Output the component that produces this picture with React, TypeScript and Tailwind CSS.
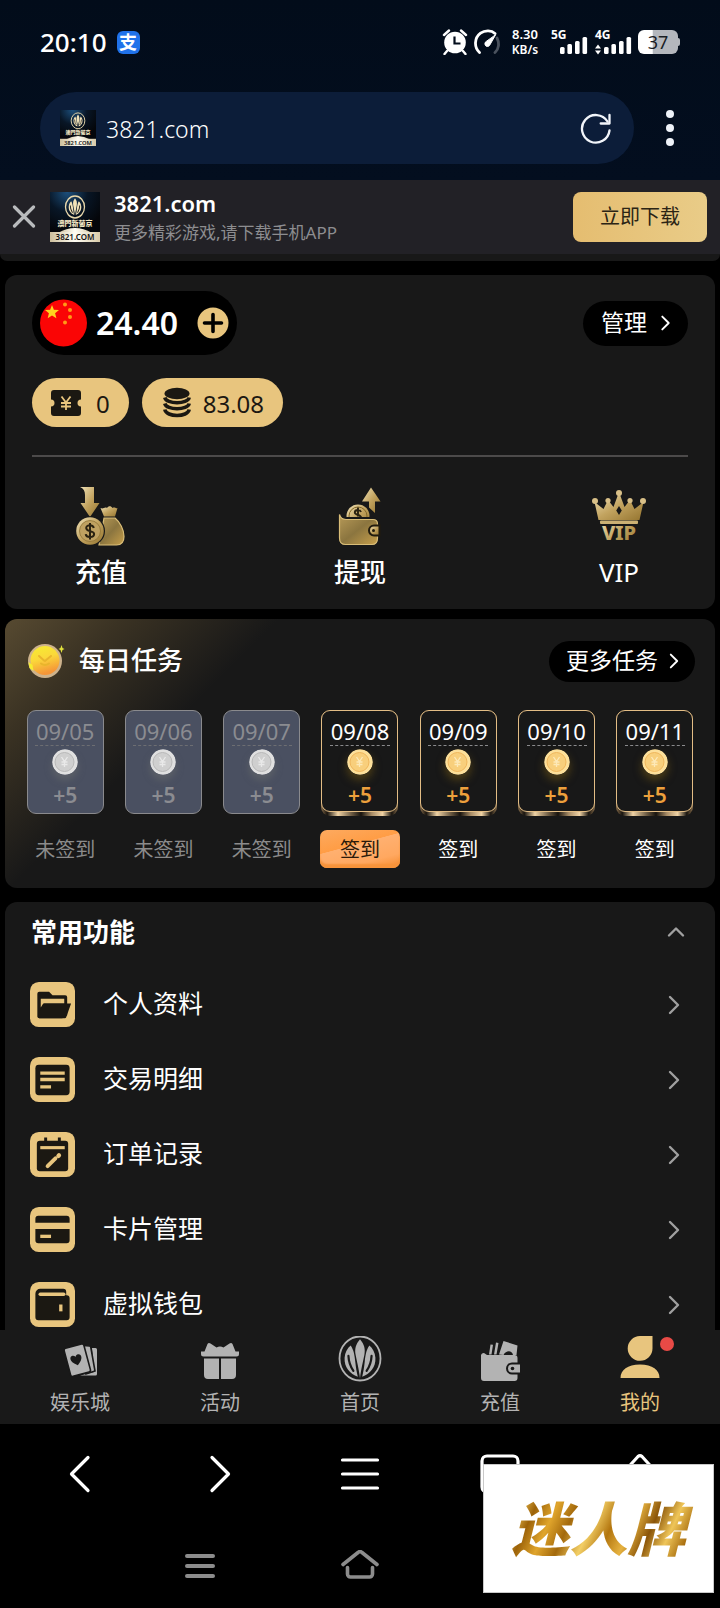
import React from "react";

const sans = "font-['Noto_Sans','Noto_Sans_CJK_SC',sans-serif]";

function GoldDefs() {
  return (
    <svg width="0" height="0" className="absolute" aria-hidden="true">
      <defs>
        <linearGradient id="gold" x1="0" y1="0" x2="1" y2="1">
          <stop offset="0" stopColor="#f0e2b8" />
          <stop offset="0.5" stopColor="#c2a35f" />
          <stop offset="1" stopColor="#94742f" />
        </linearGradient>
        <linearGradient id="goldDark" x1="0" y1="0" x2="1" y2="1">
          <stop offset="0" stopColor="#b79a58" />
          <stop offset="0.5" stopColor="#8b753f" />
          <stop offset="1" stopColor="#c79f4b" />
        </linearGradient>
        <radialGradient id="night" cx="0.35" cy="0" r="0.8">
          <stop offset="0" stopColor="#1c4f7c" />
          <stop offset="0.5" stopColor="#081626" />
          <stop offset="1" stopColor="#04060a" />
        </radialGradient>
        <linearGradient id="sand" x1="0" y1="0" x2="1" y2="0">
          <stop offset="0" stopColor="#cdbf9c" />
          <stop offset="0.5" stopColor="#fffdf4" />
          <stop offset="1" stopColor="#d8caa8" />
        </linearGradient>
        <linearGradient id="face" x1="0" y1="0" x2="0.3" y2="1">
          <stop offset="0" stopColor="#f6ee30" />
          <stop offset="0.5" stopColor="#fbd83a" />
          <stop offset="1" stopColor="#f59638" />
        </linearGradient>
      </defs>
    </svg>
  );
}

function Lotus() {
  return (
    <>
      <path d="M22 5c4 4.500 5 8.500 4 13.500-1.200 6-3 12-4 20.500-1-8.500-2.800-14.500-4-20.500-1-5 0-9 4-13.500Z" />
      <path d="M13.500 10.500c3 4 3.600 9 4.200 14 .5 5 1.300 9 2.300 13C13 35 7.500 29.500 8 21c.3-4.500 2.500-8 5.500-10.500Z" />
      <path d="M30.500 10.500c-3 4-3.600 9-4.200 14-.5 5-1.300 9-2.300 13C31 35 36.500 29.500 36 21c-.3-4.500-2.500-8-5.500-10.500Z" />
      <path d="M11.500 19.500c.2 5 1.700 9 4.500 13M32.500 19.500c-.2 5-1.700 9-4.500 13" fill="none" stroke="#191919" strokeWidth="2" strokeLinecap="round" />
    </>
  );
}

function SiteLogo({ className }: { className: string }) {
  return (
    <svg viewBox="0 0 50 50" className={className} role="img" aria-label="3821.com">
      <rect width="50" height="50" fill="url(#night)" />
      <ellipse cx="25" cy="15" rx="9.500" ry="11" fill="none" stroke="#ead9ac" strokeWidth="1.300" />
      <g fill="#f1e2b8" transform="translate(15.100 3.800) scale(.45 .51)">
        <Lotus />
      </g>
      <path d="M8 41Q25 31 42 41Z" fill="url(#sand)" />
      <rect y="40" width="50" height="10" fill="url(#sand)" />
      <text x="25" y="34" textAnchor="middle" fontSize="7" fontWeight="900" fill="#f3e6c4" fontFamily="Noto Sans CJK TC, sans-serif">澳門新葡京</text>
      <text x="25" y="48" textAnchor="middle" fontSize="8" fontWeight="600" fill="#111" fontFamily="Noto Sans, sans-serif">3821.COM</text>
    </svg>
  );
}

function Chevron({ className }: { className: string }) {
  return (
    <svg viewBox="0 0 12 20" className={className} fill="none" stroke="currentColor" strokeWidth="2.400" strokeLinecap="round" strokeLinejoin="round" aria-hidden="true">
      <path d="m2 2 8 8-8 8" />
    </svg>
  );
}

function Signal({ label, arrows }: { label: string; arrows?: boolean }) {
  return (
    <svg viewBox="0 0 38 30" className="h-[30px] w-[38px]" fill="#fff" role="img" aria-label={label}>
      <text x="1" y="12" fontSize="12" fontWeight="700" fontFamily="Noto Sans, sans-serif">{label}</text>
      <rect x="10" y="20" width="4.600" height="7" rx="1.500" />
      <rect x="17.400" y="17" width="4.600" height="10" rx="1.500" />
      <rect x="25" y="14" width="4.600" height="13" rx="1.500" />
      <rect x="32.500" y="10" width="4.600" height="17" rx="1.500" />
      {arrows && <path d="m4 17.500 3 4H1ZM4 27.500l3-4H1Z" />}
    </svg>
  );
}

function StatusBar() {
  return (
    <div className="flex h-[84px] items-center justify-between px-10 text-white">
      <div className="flex items-center gap-[10px]">
        <span className="text-[26px] leading-8 font-medium">20:10</span>
        <span className="flex size-[23px] items-center justify-center rounded-[6px] bg-[#2072ea] text-[18px] leading-5 font-bold">支</span>
      </div>
      <div className="flex items-center gap-[6px]">
        <svg viewBox="0 0 26 26" className="size-[26px]" aria-label="闹钟" role="img">
          <circle cx="13" cy="13.500" r="10.800" fill="#fff" />
          <path d="M2 6 7 1.500M24 6l-5-4.500M5 22l-2.500 3M21 22l2.500 3" stroke="#fff" strokeWidth="2.400" strokeLinecap="round" />
          <path d="M12.500 7.500v7h6" fill="none" stroke="#030d1c" strokeWidth="2.200" />
        </svg>
        <svg viewBox="0 0 26 26" className="size-[26px]" fill="none" strokeWidth="2.800" strokeLinecap="round" aria-label="网速" role="img">
          <path d="M23 9c2.500 5 2 11-2 14.500" stroke="#4a525e" />
          <path d="M5.500 23.500C0 18.500 0 9 6.500 4.200c4.500-3.200 11-3 14.500.3" stroke="#fff" />
          <path d="M21.500 6 15.500 16.500c-2 2.500-6 0-4.200-3.200Z" fill="#fff" stroke="#fff" strokeWidth="1" strokeLinejoin="round" />
        </svg>
        <div className="ml-1 flex w-[30px] flex-col items-center text-[13px] leading-[15px] font-semibold">
          <span>8.30</span>
          <span className="text-[12px] leading-[15px]">KB/s</span>
        </div>
        <div className="ml-1 flex gap-[6px]">
          <Signal label="5G" />
          <Signal label="4G" arrows />
        </div>
        <div className="flex items-center">
          <div className="flex h-6 w-10 items-center justify-center rounded-[6px] bg-linear-to-r from-white from-36% to-[#b4b7bd] to-37% text-[18px] leading-6 text-[#1a1d24]">37</div>
          <div className="h-2 w-[2px] rounded-r bg-[#b4b7bd]" />
        </div>
      </div>
    </div>
  );
}

function AddressBar() {
  return (
    <div className="flex items-center pt-2 pr-[46px] pb-4 pl-10">
      <div className="flex h-[72px] min-w-0 flex-1 items-center rounded-full bg-[#0c1d39] pr-[22px] pl-5">
        <SiteLogo className="size-9 shrink-0" />
        <input aria-label="网址" defaultValue="3821.com" className="ml-[10px] h-10 min-w-0 flex-1 bg-transparent pt-[2px] text-[23px] leading-8 font-light text-white outline-none" />
        <button aria-label="刷新" className="shrink-0">
          <svg viewBox="0 0 32 32" className="size-8" fill="none" stroke="#f2f5fa" strokeWidth="2.300" strokeLinecap="round" strokeLinejoin="round">
            <path d="M29.500 18.500A13.800 13.800 0 1 1 27.500 9.500" />
            <path d="M29.500 3v8.500h-8.800" />
          </svg>
        </button>
      </div>
      <button aria-label="菜单" className="ml-8 flex flex-col gap-[6px]">
        <span className="size-2 rounded-full bg-[#eef2f8]" />
        <span className="size-2 rounded-full bg-[#eef2f8]" />
        <span className="size-2 rounded-full bg-[#eef2f8]" />
      </button>
    </div>
  );
}

function DownloadBar() {
  return (
    <div className="flex h-[74px] shrink-0 items-center bg-[#222126] pr-[13px] pl-3">
      <button aria-label="关闭" className="shrink-0">
        <svg viewBox="0 0 24 24" className="size-6" stroke="#b9bbbd" strokeWidth="3.200" strokeLinecap="round">
          <path d="m2.500 2 19 19M21.500 2l-19 19" />
        </svg>
      </button>
      <SiteLogo className="ml-[14px] size-[50px] shrink-0" />
      <div className="ml-[14px] flex min-w-0 flex-1 flex-col gap-1">
        <strong className="text-[22px] leading-7 font-semibold text-white">3821.com</strong>
        <span className="truncate text-[17px] leading-6 text-[#8d8d90]">更多精彩游戏,请下载手机APP</span>
      </div>
      <button className="h-[50px] w-[134px] shrink-0 rounded-lg bg-linear-to-r from-[#e5bd70] to-[#e9cc88] text-[20px] text-[#2b2415]">立即下载</button>
    </div>
  );
}

function DepositIcon() {
  return (
    <svg viewBox="0 0 60 60" className="size-[60px]" aria-hidden="true">
      <path d="M9 1h14v16h5.500L19 31 9.500 17H14V9c0-4-1.500-6.500-5-8Z" fill="url(#gold)" />
      <path d="M29.500 22c3 1.500 4-1.500 6.500 0 1.500-2.500 4-2.500 5.500 0 2.500-1.500 3 1 5 0L44 30.500H33Z" fill="url(#gold)" />
      <path d="M33 32h11c5 4 9 12 9 18.500 0 6-3 8.500-7.500 8.500H28Z" fill="url(#goldDark)" stroke="#d9bd78" strokeWidth="1.200" />
      <ellipse cx="19" cy="45" rx="15" ry="14.800" fill="#181818" />
      <circle cx="19" cy="45" r="13.800" fill="url(#gold)" />
      <circle cx="19" cy="45" r="10.500" fill="#bfa161" stroke="#8f7336" strokeWidth=".8" />
      <path d="M22.800 42c-.4-2-1.800-2.700-3.800-2.700-2.200 0-3.800 1-3.800 2.800 0 4.300 7.900 1.800 7.900 6 0 2-1.800 3-4.100 3-2.300 0-4-1-4.300-3M19 37v16.500" fill="none" stroke="#2a2211" strokeWidth="2" />
    </svg>
  );
}

function WithdrawIcon() {
  return (
    <svg viewBox="0 0 60 60" className="size-[60px]" aria-hidden="true">
      <path d="m41 1.500 9.500 14H45V27l-6-5.500v-6h-7Z" fill="url(#gold)" />
      <circle cx="28" cy="30" r="11.500" fill="url(#gold)" />
      <circle cx="28" cy="30" r="9" fill="none" stroke="#836828" strokeWidth="1" />
      <path d="M31 26c-.5-1.500-1.600-2-3-2-2 0-3.200 1-3.200 2.500 0 3 6.300 1.500 6.300 5.500M28 21.500v9" fill="none" stroke="#2a2211" strokeWidth="1.900" />
      <path d="M9.500 29v22.500c0 4 2 6 6 6H43c4 0 6-2 6-6V37c0-3-2-5-5-5H15c-3 0-4.500-.5-5.500-3Z" fill="#181818" stroke="#181818" strokeWidth="2" />
      <path d="M9.500 28.500V52c0 4.500 2 6.500 6 6.500H42c4 0 5.500-2 5.500-6.500V38c0-3-1.500-4.500-4.500-4.500H16c-3 0-5.500-1-6.500-5Z" fill="url(#goldDark)" stroke="#d9bd78" strokeWidth="1.200" />
      <path d="M49.500 39.500H44a5 5 0 0 0 0 10h5.500Z" fill="url(#gold)" stroke="#211b0e" strokeWidth="2" />
      <circle cx="43.500" cy="44.500" r="1.500" fill="#211b0e" />
    </svg>
  );
}

function VipIcon() {
  return (
    <svg viewBox="0 0 60 60" className="size-[60px]" aria-hidden="true">
      <path d="M9.500 34 5.500 16l9 7 4.500-9 5.500 7L30 6l5.500 15 5.500-7 4.500 9 9-7-4 18ZM30 20l-2.800 4.500L30 29l2.800-4.500Z" fill="url(#gold)" fillRule="evenodd" />
      <g fill="#d9c088">
        <circle cx="6" cy="15" r="3" />
        <circle cx="19" cy="14.500" r="2.600" />
        <circle cx="30" cy="7" r="3" />
        <circle cx="41" cy="14.500" r="2.600" />
        <circle cx="54" cy="15" r="3" />
      </g>
      <rect x="11" y="34.500" width="38" height="3.600" rx="1" fill="#cbb073" />
      <text x="30" y="54" textAnchor="middle" fontSize="20" fontWeight="800" fill="url(#gold)" fontFamily="Noto Sans, sans-serif">VIP</text>
    </svg>
  );
}

function WalletCard() {
  return (
    <section className="mx-[5px] mt-[14px] rounded-xl bg-[#181818] px-[27px] pt-4 pb-[19px]">
      <div className="flex items-center justify-between">
        <div className="flex h-16 items-center rounded-full bg-black px-2">
          <svg viewBox="0 0 48 48" className="size-12" role="img" aria-label="人民币">
            <circle cx="23.500" cy="24" r="23.500" fill="#fa0505" />
            <path d="m12 6 1.900 4.700 5.100.3-3.900 3.300 1.300 4.900-4.400-2.700-4.300 2.700 1.200-4.900L5 11l5.100-.3Z" fill="#ffd21f" />
            <g fill="#ff9a17">
              <circle cx="25" cy="5.500" r="2" />
              <circle cx="30" cy="11" r="2" />
              <circle cx="30" cy="18" r="2" />
              <circle cx="25" cy="23.500" r="2" />
            </g>
          </svg>
          <span className="ml-2 text-[32px] leading-10 font-semibold text-white">24.40</span>
          <button aria-label="充值" className="ml-[19px]">
            <svg viewBox="0 0 32 32" className="size-8">
              <circle cx="16" cy="16" r="15.500" fill="#e8c57e" />
              <path d="M16 7.500v17M7.500 16h17" stroke="#000" strokeWidth="3.600" strokeLinecap="round" />
            </svg>
          </button>
        </div>
        <button className="flex h-[45px] items-center gap-[13px] rounded-full bg-black pr-[17px] pl-[18px] text-[23px] leading-8 text-white">
          <span className="pb-[2px]">管理</span>
          <Chevron className="h-4 w-[11px]" />
        </button>
      </div>
      <div className="mt-[23px] flex gap-[13px] text-[24px] leading-8 text-[#1c1812]">
        <div className="flex h-[49px] items-center rounded-full bg-[#e8c57e] pr-[19px] pl-[18px]">
          <svg viewBox="0 0 32 28" className="h-7 w-8" aria-hidden="true">
            <path d="M4 1h24a3 3 0 0 1 3 3v6.500a3.500 3.500 0 0 0 0 7V24a3 3 0 0 1-3 3H4a3 3 0 0 1-3-3v-6.500a3.500 3.500 0 0 0 0-7V4a3 3 0 0 1 3-3Z" fill="#1b1812" />
            <path d="m11.500 7.500 4.500 6 4.500-6M16 13.500V21M11 14h10M11 17.500h10" fill="none" stroke="#e8c57e" strokeWidth="1.800" />
          </svg>
          <span className="ml-[14px] pt-[2px]">0</span>
        </div>
        <div className="flex h-[49px] items-center rounded-full bg-[#e8c57e] pr-[19px] pl-[21px]">
          <svg viewBox="0 0 28 32" className="h-8 w-7" aria-hidden="true">
            <ellipse cx="14" cy="6.500" rx="12.500" ry="5.800" fill="#1b1812" />
            <g fill="none" stroke="#1b1812" strokeWidth="3.600">
              <path d="M1.800 10.500c1.500 7 23 7 24.400 0" />
              <path d="M1.800 16.500c1.500 7 23 7 24.400 0" />
              <path d="M1.800 22.500c1.500 8 23 8 24.400 0" />
            </g>
          </svg>
          <span className="ml-3 pt-[2px]">83.08</span>
        </div>
      </div>
      <hr className="mt-7 h-[2px] border-0 bg-[#4c4a4a]" />
      <nav className="mt-[29px] flex justify-between text-[26px] leading-9 font-medium text-white">
        <a href="#deposit" className="flex w-[138px] flex-col items-center gap-2"><DepositIcon />充值</a>
        <a href="#withdraw" className="flex w-[138px] flex-col items-center gap-2"><WithdrawIcon />提现</a>
        <a href="#vip" className="flex w-[138px] flex-col items-center gap-2"><VipIcon /><span className="font-normal">VIP</span></a>
      </nav>
    </section>
  );
}

function Coin({ missed }: { missed: boolean }) {
  return (
    <svg viewBox="0 0 26 26" className={missed ? "size-[26px] rounded-full shadow-[0_5px_7px_rgba(110,112,110,0.5)]" : "size-[26px] rounded-full shadow-[0_5px_8px_rgba(130,100,20,0.5)]"} aria-hidden="true">
      <circle cx="13" cy="13" r="12.800" fill={missed ? "#e0e0e0" : "#fde09a"} />
      <circle cx="12.500" cy="13" r="9.500" fill={missed ? "#cfcfcf" : "#f8cf7c"} stroke={missed ? "#b8b8b8" : "#efb65c"} strokeWidth="1" />
      <path d="m9.500 8 3 4.500 3-4.500M12.500 12.500V18M9.500 13h6M9.500 15.500h6" fill="none" stroke={missed ? "#e9e9e9" : "#fde9b8"} strokeWidth="1.300" />
    </svg>
  );
}

const days = ["09/05", "09/06", "09/07", "09/08", "09/09", "09/10", "09/11"];
const MISSED_COUNT = 3;

function DayFace({ date, missed }: { date: string; missed: boolean }) {
  return (
    <>
      <span className={missed ? "mt-[6px] text-[22px] leading-7 text-[#8b8c91]" : "mt-[6px] text-[22px] leading-7 text-white"}>{date}</span>
      <span className={missed ? "w-[60px] border-t border-dashed border-[#6d6e72]" : "w-[60px] border-t border-dashed border-[#8a8a8c]"} />
      <span className="mt-[3px]"><Coin missed={missed} /></span>
      <span className={missed ? "mt-2 text-[21px] leading-6 font-semibold text-[#8b8c91]" : "mt-2 text-[21px] leading-6 font-semibold text-[#eda03c]"}>+5</span>
    </>
  );
}

function DailyCard() {
  return (
    <section className="mx-[5px] mt-[10px] rounded-xl bg-[#181818] bg-[linear-gradient(135deg,#574a31_0%,#3a3223_12%,#181818_28%)] pt-[21px] pb-5">
      <div className="flex items-center justify-between pr-5 pl-[22px]">
        <div className="flex items-center gap-[14px]">
          <svg viewBox="0 0 38 38" className="size-[38px]" aria-hidden="true">
            <circle cx="18" cy="19" r="17" fill="#cdb28c" />
            <circle cx="18" cy="18.500" r="14.500" fill="url(#face)" />
            <path d="m1.500 20 4 3 1 6-4-3Z" fill="#f6ee30" />
            <path d="m12 14 5 4.500M24 14l-6 5M14 21.500q4 3 8 0" fill="none" stroke="#e9b52c" strokeWidth="2" strokeLinecap="round" />
            <path d="m34.500 3 1 3 2 1-2 1-1 3-1-3-2-1 2-1Z" fill="#e2e23c" />
          </svg>
          <h2 className="pb-[2px] text-[26px] leading-10 font-medium text-white">每日任务</h2>
        </div>
        <button className="flex h-[41px] items-center gap-[11px] rounded-full bg-black pr-4 pl-[17px] text-[23px] leading-8 text-white">
          <span className="pb-[2px]">更多任务</span>
          <Chevron className="h-4 w-[10px]" />
        </button>
      </div>
      <div className="mt-7 grid grid-cols-7 px-[11px]">
        {days.map((date, i) => {
          const missed = i < MISSED_COUNT;
          return (
            <div key={date} className="flex flex-col items-center">
              {missed ? (
                <div className="mb-[2px] flex h-[104px] w-[77px] flex-col items-center rounded-[9px] border border-[#8a8a8d] bg-[#4a5061]">
                  <DayFace date={date} missed />
                </div>
              ) : (
                <div className="h-[106px] w-[77px] rounded-[9px] bg-[linear-gradient(90deg,#8a6f4c_0%,#17130e_8%,#f0d3a5_22%,#6b5a42_40%,#17130e_52%,#a88c66_66%,#f0d3a5_80%,#17130e_92%,#8a6f4c_100%)]">
                  <div className="flex h-[102px] flex-col items-center rounded-[9px] border border-[#e3bd85] bg-[#181818]">
                    <DayFace date={date} missed={false} />
                  </div>
                </div>
              )}
              {missed ? (
                <span className="mt-[15px] h-[37px] text-[20px] leading-[37px] text-[#8b8b8b]">未签到</span>
              ) : i === MISSED_COUNT ? (
                <button className="mt-[14px] h-[38px] w-20 rounded-[7px] bg-[linear-gradient(165deg,#fdaa60_0%,#ff9d45_40%,#ffb070_41%,#ffa860_75%,#f58a2c_100%)] pt-[1px] text-[20px] leading-[37px] text-[#2a1a0b] inset-shadow-[0_-4px_2px_#f7933a]">签到</button>
              ) : (
                <button className="mt-[15px] h-[37px] text-[20px] leading-[37px] text-white">签到</button>
              )}
            </div>
          );
        })}
      </div>
    </section>
  );
}

const dark = "#1b1812";
const gold = "#e8c57e";

const menu = [
  {
    label: "个人资料",
    icon: (
      <>
        <path d="M7.500 12a2 2 0 0 1 2-2h10l3.500 3.500h13a2 2 0 0 1 2 2V34L33 37H9.500a2 2 0 0 1-2-2Z" fill={dark} />
        <path d="M11 17h24v5H13.500L11 26Z" fill={gold} />
        <path d="M14.500 22H42l-5 14a1.500 1.500 0 0 1-1.500 1H9.500a2 2 0 0 1-1.500-2Z" fill={dark} />
      </>
    ),
  },
  {
    label: "交易明细",
    icon: (
      <>
        <rect x="5.500" y="8" width="35" height="31" rx="3.500" fill={dark} />
        <path d="M10.500 16.500H35.500M10.500 23H35.500M10.500 30.500H21.500" stroke={gold} strokeWidth="3.400" />
      </>
    ),
  },
  {
    label: "订单记录",
    icon: (
      <>
        <rect x="7" y="9" width="32" height="31" rx="3" fill={dark} />
        <path d="M16 5.500V12M30 5.500V12" stroke={dark} strokeWidth="3" />
        <path d="M10.500 16H35.500" stroke={gold} strokeWidth="3.200" />
        <path d="m18 35 8-8" stroke={gold} strokeWidth="4" strokeLinecap="round" />
        <path d="m29 24.500.6-.6" stroke={gold} strokeWidth="4.400" strokeLinecap="round" />
      </>
    ),
  },
  {
    label: "卡片管理",
    icon: (
      <>
        <path d="M5.500 16v-4a3 3 0 0 1 3-3h29a3 3 0 0 1 3 3v4ZM5.500 22.500h35V34a3 3 0 0 1-3 3h-29a3 3 0 0 1-3-3Z" fill={dark} />
        <path d="M10.500 30H21.500" stroke={gold} strokeWidth="3.400" />
      </>
    ),
  },
  {
    label: "虚拟钱包",
    icon: (
      <>
        <path d="M5.500 12a5 5 0 0 1 5-5H34a3 3 0 0 1 3 3v3.500h.5a3 3 0 0 1 3 3V36a3 3 0 0 1-3 3h-29a3 3 0 0 1-3-3Z" fill={dark} />
        <path d="M10.500 12.500H34.500" stroke={gold} strokeWidth="3.600" strokeLinecap="round" />
        <path d="M31.500 23V30" stroke={gold} strokeWidth="3.400" />
      </>
    ),
  },
];

function FunctionsCard() {
  return (
    <section className="mx-[5px] mt-[14px] rounded-t-xl bg-[#181818]">
      <button className="flex h-[60px] w-full items-center justify-between pr-[29px] pl-[26px]" aria-expanded="true">
        <h2 className="text-[26px] leading-10 font-semibold text-white">常用功能</h2>
        <svg viewBox="0 0 20 12" className="h-3 w-5" fill="none" stroke="#a0a0a0" strokeWidth="2.400" strokeLinecap="round" strokeLinejoin="round" aria-hidden="true">
          <path d="m3 9.500 7-7 7 7" />
        </svg>
      </button>
      <ul className="mt-[5px]">
        {menu.map(({ label, icon }) => (
          <li key={label}>
            <a href={"#" + label} className="flex h-[75px] items-center pr-[35px] pl-[25px] text-[25px] leading-9 text-white">
              <svg viewBox="0 0 46 46" className="size-[45px]" aria-hidden="true">
                <rect width="46" height="46" rx="9" fill={gold} />
                {icon}
              </svg>
              <span className="ml-7 flex-1 pb-1">{label}</span>
              <Chevron className="h-5 w-3 text-[#a0a0a0]" />
            </a>
          </li>
        ))}
      </ul>
    </section>
  );
}

const tabs = [
  {
    label: "娱乐城",
    icon: (
      <g fill="#b3b3b3">
        <path d="M34 12h3.500a1.500 1.500 0 0 1 1.500 1.500V38a1.500 1.500 0 0 1-1.500 1.500H22L36 36Z" />
        <path d="m25 9.500 6.500.5a1.500 1.500 0 0 1 1.300 1.400L37 35l-9 3Z" stroke="#191919" strokeWidth="1.600" />
        <g transform="rotate(-15 20 24)">
          <rect x="9" y="9.500" width="20.500" height="29" rx="2" stroke="#191919" strokeWidth="1.600" />
          <path d="M18.500 29c-8-5.500-6-10.500-2.800-10.500 1.700 0 2.800 1.500 2.800 2 0-.5 1.100-2 2.800-2 3.200 0 5.200 5-2.800 10.500Z" fill="#191919" />
        </g>
      </g>
    ),
  },
  {
    label: "活动",
    icon: (
      <g fill="#b3b3b3">
        <path d="M3 15.500h3.500L9.500 8q1-1.500 3-.5l6 4q3.500-2 7 0l6-4q2-1 3 .5l3 7.500H41V18a2.500 2.500 0 0 1-2.500 2.500h-33A2.500 2.500 0 0 1 3 18Z" />
        <path d="M6 22.500h15V43H10a4 4 0 0 1-4-4ZM23 22.500h15V39a4 4 0 0 1-4 4H23Z" />
      </g>
    ),
  },
  {
    label: "首页",
    icon: (
      <g fill="#b3b3b3">
        <ellipse cx="22" cy="22.500" rx="20.500" ry="22" fill="none" stroke="#b3b3b3" strokeWidth="1.800" />
        <g transform="translate(-2.200 -2.500) scale(1.100 1.150)"><Lotus /></g>
      </g>
    ),
  },
  {
    label: "充值",
    icon: (
      <g fill="#b3b3b3">
        <path d="m11 18.500 1.500-10 2.500.3-1.500 9.700ZM16 18.500l2-12 2.500.5-2 11.500ZM21 18.500 25.500 5l14 4.500-1 9.500h-3.500c-1-5-7-5-9.500 0Z" />
        <path d="M3 19a3 3 0 0 1 3-2l3 2h27.500a3 3 0 0 1 3 3v20a3 3 0 0 1-3 3H6a3 3 0 0 1-3-3Z" />
        <path d="M43 27.500H34a5 5 0 0 0 0 10h9Z" stroke="#191919" strokeWidth="2" />
        <circle cx="34.500" cy="32.500" r="1.800" fill="#191919" />
      </g>
    ),
  },
  {
    label: "我的",
    icon: (
      <g fill="#e8c57e">
        <path d="M34.500 0v12.500A12.400 12.400 0 1 1 22 0Z" />
        <path d="M2.500 42c0-8 7-13.500 19.500-13.500S41.500 34 41.500 42Z" />
      </g>
    ),
  },
];

function TabBar() {
  return (
    <nav className="grid h-[94px] shrink-0 grid-cols-5 bg-[#191919] px-[10px]">
      {tabs.map(({ label, icon }, i) => (
        <a key={label} href={"#tab" + i} className={i === 4 ? "flex flex-col items-center pt-[6px] text-[20px] leading-7 text-[#e8c57e]" : "flex flex-col items-center pt-[6px] text-[20px] leading-7 text-[#b3b3b3]"}>
          <span className="relative">
            <svg viewBox="0 0 44 46" className="h-[46px] w-11" aria-hidden="true">{icon}</svg>
            {i === 4 && <span className="absolute top-[1px] -right-[12px] size-[14px] rounded-full bg-[#e84a46]" />}
          </span>
          <span className="mt-[7px]">{label}</span>
        </a>
      ))}
    </nav>
  );
}

function BrowserNav() {
  const icons = [
    { name: "后退", d: "M28 4.500 11.500 21 28 37.500" },
    { name: "前进", d: "M12 4.500 28.500 21 12 37.500" },
    { name: "主菜单", d: "M2.500 7H37.500M2.500 21H37.500M2.500 35H37.500" },
    { name: "标签页", d: "M7 3H33a5 5 0 0 1 5 5V34a5 5 0 0 1-5 5H7a5 5 0 0 1-5-5V8a5 5 0 0 1 5-5Z" },
    { name: "主页", d: "M3 20 18 3.500a3 3 0 0 1 4 0l15 16.500v17H3Z" },
  ];
  return (
    <div className="grid h-[100px] shrink-0 grid-cols-5 bg-black px-[10px]">
      {icons.map(({ name, d }) => (
        <button key={name} aria-label={name} className="flex items-center justify-center">
          <svg viewBox="0 0 40 42" className="h-[42px] w-10" fill="none" stroke="#fff" strokeWidth="3.200" strokeLinecap="round" strokeLinejoin="round">
            <path d={d} />
          </svg>
        </button>
      ))}
    </div>
  );
}

function SystemNav() {
  return (
    <div className="flex h-[84px] shrink-0 items-center justify-center gap-[120px] bg-black pr-[160px]">
      <button aria-label="最近任务">
        <svg viewBox="0 0 40 32" className="h-8 w-10" stroke="#8c8c8c" strokeWidth="4" strokeLinecap="round">
          <path d="M7 6h26M7 16h26M7 26h26" />
        </svg>
      </button>
      <button aria-label="桌面">
        <svg viewBox="0 0 40 32" className="h-8 w-10" fill="none" stroke="#8c8c8c" strokeWidth="3.600" strokeLinecap="round" strokeLinejoin="round">
          <path d="M3 14.500 18 2.500a3 3 0 0 1 4 0l15 12M7.500 17.500V24a3 3 0 0 0 3 3h19a3 3 0 0 0 3-3v-6.500" />
        </svg>
      </button>
    </div>
  );
}

export default function App() {
  return (
    <div className={"flex h-screen flex-col overflow-hidden bg-black " + sans}>
      <GoldDefs />
      <header className="shrink-0 bg-linear-to-b from-[#020c1a] to-[#030e1f]">
        <StatusBar />
        <AddressBar />
      </header>
      <DownloadBar />
      <main className="min-h-0 flex-1 overflow-y-auto [scrollbar-width:none]">
        <div className="h-[7px] rounded-b-xl bg-[#181818]" />
        <WalletCard />
        <DailyCard />
        <FunctionsCard />
      </main>
      <footer className="relative shrink-0">
        <TabBar />
        <BrowserNav />
        <SystemNav />
        <div className="absolute right-[6px] bottom-[15px] flex h-[129px] w-[231px] items-center justify-center border border-[#c9c9c9] bg-white">
          <span className="bg-[linear-gradient(115deg,#b87a14_0%,#f0c455_10%,#9c6208_18%,#e0a52c_27%,#a3690c_36%,#f3cf66_46%,#b3760f_55%,#e6b240_64%,#8a5408_73%,#efc558_82%,#a86d0e_91%,#8a5408_100%)] bg-clip-text px-2 text-[58px] leading-[80px] font-black text-transparent italic">迷人牌</span>
        </div>
      </footer>
    </div>
  );
}
